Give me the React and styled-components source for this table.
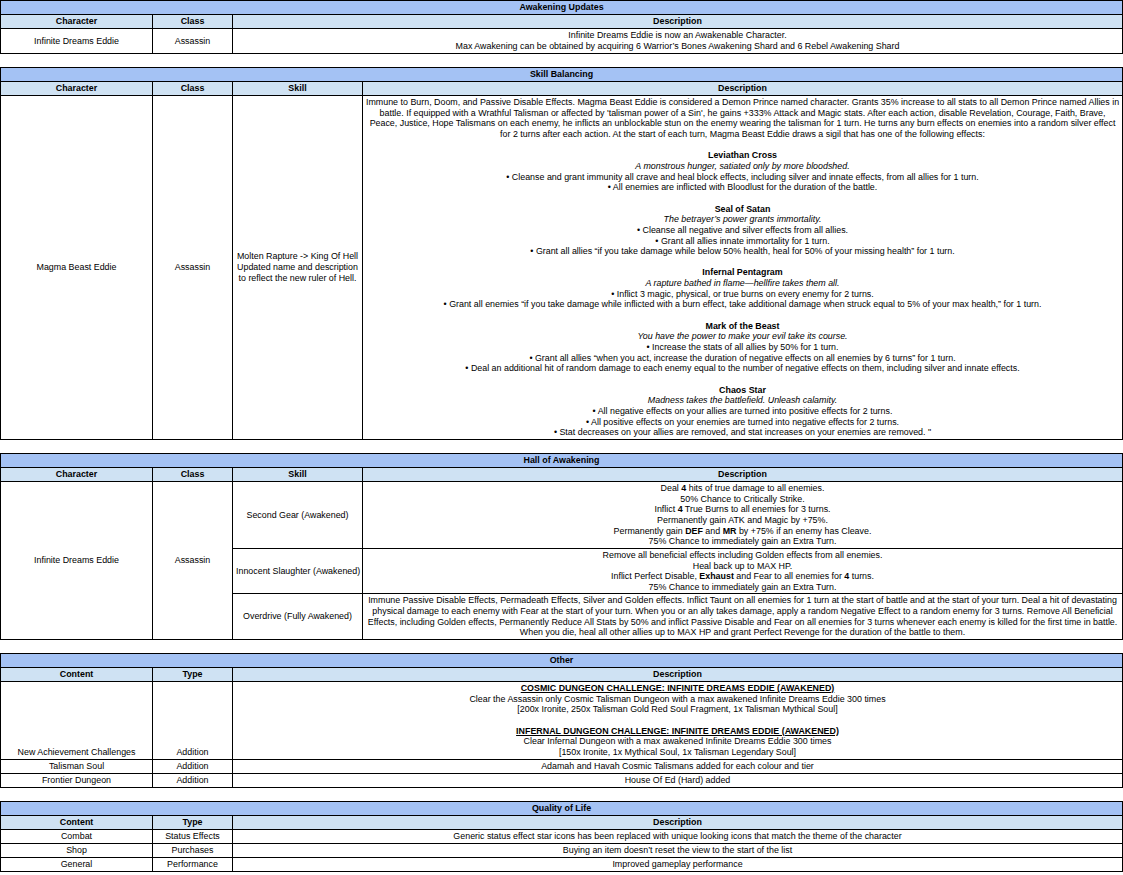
import React from "react";
import styled, { createGlobalStyle } from "styled-components";

const GlobalStyle = createGlobalStyle`
  html, body {
    margin: 0;
    padding: 0;
    background: #fff;
    overflow: hidden;
  }
  body {
    font-family: "Liberation Sans", Arial, sans-serif;
    font-size: 8.9px;
    color: #000;
  }
`;

const Page = styled.div`
  display: flex;
  flex-direction: column;
  gap: 13px;
  width: 1123px;
`;

const Table = styled.table`
  width: 100%;
  border-collapse: collapse;
  table-layout: fixed;
  line-height: 10.65px;
`;

const Row = styled.tr`
  height: ${(p) => (p.$h ? `${p.$h}px` : "14px")};
`;

const TitleCell = styled.th`
  background: #a4c2f4;
  border: 1px solid #000;
  padding: 1px 3px;
  font-weight: bold;
  text-align: center;
`;

const HeadCell = styled.th`
  background: #cfe2f3;
  border: 1px solid #000;
  padding: 1px 3px;
  font-weight: bold;
  text-align: center;
`;

const Cell = styled.td`
  border: 1px solid #000;
  padding: 1px 3px;
  text-align: center;
  vertical-align: ${(p) => p.$valign || "middle"};
  white-space: ${(p) => (p.$nowrap ? "nowrap" : "normal")};
`;

const Line = styled.div`
  white-space: nowrap;
  font-weight: ${(p) => (p.$bold ? "bold" : "normal")};
  font-style: ${(p) => (p.$italic ? "italic" : "normal")};
  text-decoration: ${(p) => (p.$underline ? "underline" : "none")};
`;

const Blank = styled.div`
  height: 10.65px;
`;

const Cols = () => (
  <colgroup>
    <col style={{ width: 152 }} />
    <col style={{ width: 80 }} />
    <col style={{ width: 130 }} />
    <col />
  </colgroup>
);

const Section = ({ title, heads, children }) => (
  <Table>
    <Cols />
    <thead>
      <Row>
        <TitleCell colSpan={4}>{title}</TitleCell>
      </Row>
      <Row>
        {heads.map((h) => (
          <HeadCell key={h.label} colSpan={h.span || 1}>
            {h.label}
          </HeadCell>
        ))}
      </Row>
    </thead>
    <tbody>{children}</tbody>
  </Table>
);

const threeCols = (a, b) => [{ label: a }, { label: b }, { label: "Description", span: 2 }];
const fourCols = [{ label: "Character" }, { label: "Class" }, { label: "Skill" }, { label: "Description" }];

const Sigil = ({ name, flavor, effects }) => (
  <>
    <Line $bold>{name}</Line>
    <Line $italic>{flavor}</Line>
    {effects.map((e) => (
      <Line key={e}>• {e}</Line>
    ))}
  </>
);

export default function App() {
  return (
    <>
      <GlobalStyle />
      <Page>
        <Section title="Awakening Updates" heads={threeCols("Character", "Class")}>
          <Row $h={25}>
            <Cell>Infinite Dreams Eddie</Cell>
            <Cell>Assassin</Cell>
            <Cell colSpan={2}>
              <Line>Infinite Dreams Eddie is now an Awakenable Character.</Line>
              <Line>Max Awakening can be obtained by acquiring 6 Warrior’s Bones Awakening Shard and 6 Rebel Awakening Shard</Line>
            </Cell>
          </Row>
        </Section>

        <Section title="Skill Balancing" heads={fourCols}>
          <Row>
            <Cell>Magma Beast Eddie</Cell>
            <Cell>Assassin</Cell>
            <Cell>
              <Line>Molten Rapture -&gt; King Of Hell</Line>
              <Line>Updated name and description</Line>
              <Line>to reflect the new ruler of Hell.</Line>
            </Cell>
            <Cell>
              <Line>Immune to Burn, Doom, and Passive Disable Effects. Magma Beast Eddie is considered a Demon Prince named character. Grants 35% increase to all stats to all Demon Prince named Allies in</Line>
              <Line>battle. If equipped with a Wrathful Talisman or affected by 'talisman power of a Sin', he gains +333% Attack and Magic stats. After each action, disable Revelation, Courage, Faith, Brave,</Line>
              <Line>Peace, Justice, Hope Talismans on each enemy, he inflicts an unblockable stun on the enemy wearing the talisman for 1 turn. He turns any burn effects on enemies into a random silver effect</Line>
              <Line>for 2 turns after each action. At the start of each turn, Magma Beast Eddie draws a sigil that has one of the following effects:</Line>
              <Blank />
              <Sigil
                name="Leviathan Cross"
                flavor="A monstrous hunger, satiated only by more bloodshed."
                effects={[
                  "Cleanse and grant immunity all crave and heal block effects, including silver and innate effects, from all allies for 1 turn.",
                  "All enemies are inflicted with Bloodlust for the duration of the battle.",
                ]}
              />
              <Blank />
              <Sigil
                name="Seal of Satan"
                flavor="The betrayer’s power grants immortality."
                effects={[
                  "Cleanse all negative and silver effects from all allies.",
                  "Grant all allies innate immortality for 1 turn.",
                  "Grant all allies “if you take damage while below 50% health, heal for 50% of your missing health” for 1 turn.",
                ]}
              />
              <Blank />
              <Sigil
                name="Infernal Pentagram"
                flavor="A rapture bathed in flame—hellfire takes them all."
                effects={[
                  "Inflict 3 magic, physical, or true burns on every enemy for 2 turns.",
                  "Grant all enemies “if you take damage while inflicted with a burn effect, take additional damage when struck equal to 5% of your max health,” for 1 turn.",
                ]}
              />
              <Blank />
              <Sigil
                name="Mark of the Beast"
                flavor="You have the power to make your evil take its course."
                effects={[
                  "Increase the stats of all allies by 50% for 1 turn.",
                  "Grant all allies “when you act, increase the duration of negative effects on all enemies by 6 turns” for 1 turn.",
                  "Deal an additional hit of random damage to each enemy equal to the number of negative effects on them, including silver and innate effects.",
                ]}
              />
              <Blank />
              <Sigil
                name="Chaos Star"
                flavor="Madness takes the battlefield. Unleash calamity."
                effects={[
                  "All negative effects on your allies are turned into positive effects for 2 turns.",
                  "All positive effects on your enemies are turned into negative effects for 2 turns.",
                  "Stat decreases on your allies are removed, and stat increases on your enemies are removed. \"",
                ]}
              />
            </Cell>
          </Row>
        </Section>

        <Section title="Hall of Awakening" heads={fourCols}>
          <Row>
            <Cell rowSpan={3}>Infinite Dreams Eddie</Cell>
            <Cell rowSpan={3}>Assassin</Cell>
            <Cell $nowrap>Second Gear (Awakened)</Cell>
            <Cell>
              <Line>Deal <b>4</b> hits of true damage to all enemies.</Line>
              <Line>50% Chance to Critically Strike.</Line>
              <Line>Inflict <b>4</b> True Burns to all enemies for 3 turns.</Line>
              <Line>Permanently gain ATK and Magic by +75%.</Line>
              <Line>Permanently gain <b>DEF</b> and <b>MR</b> by +75% if an enemy has Cleave.</Line>
              <Line>75% Chance to immediately gain an Extra Turn.</Line>
            </Cell>
          </Row>
          <Row>
            <Cell $nowrap>Innocent Slaughter (Awakened)</Cell>
            <Cell>
              <Line>Remove all beneficial effects including Golden effects from all enemies.</Line>
              <Line>Heal back up to MAX HP.</Line>
              <Line>Inflict Perfect Disable, <b>Exhaust</b> and Fear to all enemies for <b>4</b> turns.</Line>
              <Line>75% Chance to immediately gain an Extra Turn.</Line>
            </Cell>
          </Row>
          <Row>
            <Cell $nowrap>Overdrive (Fully Awakened)</Cell>
            <Cell>
              <Line>Immune Passive Disable Effects, Permadeath Effects, Silver and Golden effects. Inflict Taunt on all enemies for 1 turn at the start of battle and at the start of your turn. Deal a hit of devastating</Line>
              <Line>physical damage to each enemy with Fear at the start of your turn. When you or an ally takes damage, apply a random Negative Effect to a random enemy for 3 turns. Remove All Beneficial</Line>
              <Line>Effects, including Golden effects, Permanently Reduce All Stats by 50% and inflict Passive Disable and Fear on all enemies for 3 turns whenever each enemy is killed for the first time in battle.</Line>
              <Line>When you die, heal all other allies up to MAX HP and grant Perfect Revenge for the duration of the battle to them.</Line>
            </Cell>
          </Row>
        </Section>

        <Section title="Other" heads={threeCols("Content", "Type")}>
          <Row>
            <Cell $valign="bottom">New Achievement Challenges</Cell>
            <Cell $valign="bottom">Addition</Cell>
            <Cell colSpan={2}>
              <Line $bold $underline>COSMIC DUNGEON CHALLENGE: INFINITE DREAMS EDDIE (AWAKENED)</Line>
              <Line>Clear the Assassin only Cosmic Talisman Dungeon with a max awakened Infinite Dreams Eddie 300 times</Line>
              <Line>[200x Ironite, 250x Talisman Gold Red Soul Fragment, 1x Talisman Mythical Soul]</Line>
              <Blank />
              <Line $bold $underline>INFERNAL DUNGEON CHALLENGE: INFINITE DREAMS EDDIE (AWAKENED)</Line>
              <Line>Clear Infernal Dungeon with a max awakened Infinite Dreams Eddie 300 times</Line>
              <Line>[150x Ironite, 1x Mythical Soul, 1x Talisman Legendary Soul]</Line>
            </Cell>
          </Row>
          <Row>
            <Cell>Talisman Soul</Cell>
            <Cell>Addition</Cell>
            <Cell colSpan={2}>Adamah and Havah Cosmic Talismans added for each colour and tier</Cell>
          </Row>
          <Row>
            <Cell>Frontier Dungeon</Cell>
            <Cell>Addition</Cell>
            <Cell colSpan={2}>House Of Ed (Hard) added</Cell>
          </Row>
        </Section>

        <Section title="Quality of Life" heads={threeCols("Content", "Type")}>
          <Row>
            <Cell>Combat</Cell>
            <Cell>Status Effects</Cell>
            <Cell colSpan={2}>Generic status effect star icons has been replaced with unique looking icons that match the theme of the character</Cell>
          </Row>
          <Row>
            <Cell>Shop</Cell>
            <Cell>Purchases</Cell>
            <Cell colSpan={2}>Buying an item doesn’t reset the view to the start of the list</Cell>
          </Row>
          <Row>
            <Cell>General</Cell>
            <Cell>Performance</Cell>
            <Cell colSpan={2}>Improved gameplay performance</Cell>
          </Row>
        </Section>
      </Page>
    </>
  );
}
